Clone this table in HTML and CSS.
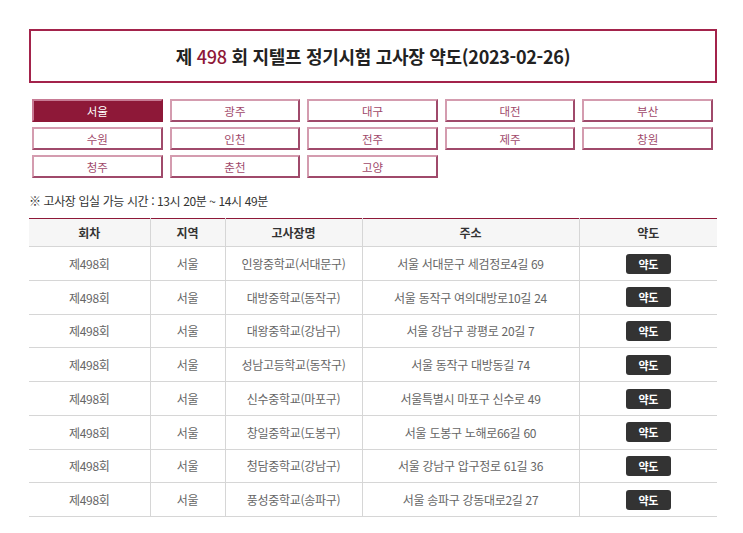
FILE: index.html
```html
<!DOCTYPE html>
<html lang="ko">
<head>
<meta charset="utf-8">
<title>고사장 약도</title>
<link rel="stylesheet" href="styles.css">
</head>
<body>
<div class="wrap">
  <div class="title-box">
    <h1 class="title">제 <span class="num">498</span> 회 지텔프 정기시험 고사장 약도(2023-02-26)</h1>
  </div>
  <div class="regions">
    <a class="region active">서울</a>
    <a class="region">광주</a>
    <a class="region">대구</a>
    <a class="region">대전</a>
    <a class="region">부산</a>
    <a class="region">수원</a>
    <a class="region">인천</a>
    <a class="region">전주</a>
    <a class="region">제주</a>
    <a class="region">창원</a>
    <a class="region">청주</a>
    <a class="region">춘천</a>
    <a class="region">고양</a>
  </div>
  <p class="notice">※ 고사장 입실 가능 시간 : 13시 20분 ~ 14시 49분</p>
  <table class="list">
    <colgroup>
      <col class="c1"><col class="c2"><col class="c3"><col class="c4"><col class="c5">
    </colgroup>
    <thead>
      <tr><th>회차</th><th>지역</th><th>고사장명</th><th>주소</th><th>약도</th></tr>
    </thead>
    <tbody>
      <tr><td>제498회</td><td>서울</td><td>인왕중학교(서대문구)</td><td>서울 서대문구 세검정로4길 69</td><td><a class="map-btn">약도</a></td></tr>
      <tr><td>제498회</td><td>서울</td><td>대방중학교(동작구)</td><td>서울 동작구 여의대방로10길 24</td><td><a class="map-btn">약도</a></td></tr>
      <tr><td>제498회</td><td>서울</td><td>대왕중학교(강남구)</td><td>서울 강남구 광평로 20길 7</td><td><a class="map-btn">약도</a></td></tr>
      <tr><td>제498회</td><td>서울</td><td>성남고등학교(동작구)</td><td>서울 동작구 대방동길 74</td><td><a class="map-btn">약도</a></td></tr>
      <tr><td>제498회</td><td>서울</td><td>신수중학교(마포구)</td><td>서울특별시 마포구 신수로 49</td><td><a class="map-btn">약도</a></td></tr>
      <tr><td>제498회</td><td>서울</td><td>창일중학교(도봉구)</td><td>서울 도봉구 노해로66길 60</td><td><a class="map-btn">약도</a></td></tr>
      <tr><td>제498회</td><td>서울</td><td>청담중학교(강남구)</td><td>서울 강남구 압구정로 61길 36</td><td><a class="map-btn">약도</a></td></tr>
      <tr><td>제498회</td><td>서울</td><td>풍성중학교(송파구)</td><td>서울 송파구 강동대로2길 27</td><td><a class="map-btn">약도</a></td></tr>
    </tbody>
  </table>
</div>
</body>
</html>
```

FILE: styles.css
```css
* { box-sizing: border-box; }
html, body { margin: 0; padding: 0; background: #fff; }
body {
  font-family: "Noto Sans CJK KR", "Noto Sans", sans-serif;
  color: #333;
  font-size: 12px;
}
.wrap {
  width: 688px;
  margin-left: 29px;
  padding-top: 29px;
}
.title-box {
  height: 54px;
  border: 2px solid #a3234b;
  display: flex;
  align-items: center;
  justify-content: center;
}
.title {
  margin: 0;
  font-size: 18px;
  font-weight: 700;
  color: #222;
  letter-spacing: -0.3px;
  line-height: 1;
}
.title .num { color: #8e1838; font-weight: 500; }
.regions {
  margin: 16px 4px 0 3px;
  display: grid;
  grid-template-columns: repeat(5, 1fr);
  column-gap: 7px;
  row-gap: 5px;
}
.region {
  display: flex;
  align-items: center;
  justify-content: center;
  height: 23px;
  border: 2px solid;
  border-color: #d49caf #a04a6b #a04a6b #d49caf;
  color: #a0486a;
  font-size: 11.5px;
  background: #fff;
}
.region.active {
  background: #8e1838;
  border-color: #c77a94 #8e1838 #8e1838 #c77a94;
  color: #fff;
}
.notice {
  margin: 14px 0 0 0;
  height: 18px;
  line-height: 18px;
  font-size: 12px;
  color: #333;
  letter-spacing: -0.4px;
}
.list {
  margin-top: 8px;
  width: 100%;
  border-collapse: collapse;
  table-layout: fixed;
  border-top: 1px solid #8e1838;
}
.c1 { width: 121px; }
.c2 { width: 75px; }
.c3 { width: 137px; }
.c4 { width: 217px; }
.c5 { width: 138px; }
.list th {
  height: 28px;
  padding: 0;
  background: #f6f6f6;
  font-weight: 700;
  font-size: 12px;
  color: #333;
  border-bottom: 1px solid #d6d6d6;
  border-left: 1px solid #d6d6d6;
}
.list td {
  height: 33.75px;
  padding: 0;
  text-align: center;
  color: #666;
  font-size: 12px;
  border-bottom: 1px solid #d6d6d6;
  border-left: 1px solid #d6d6d6;
  letter-spacing: -0.3px;
}
.list th:first-child, .list td:first-child { border-left: none; }
.map-btn {
  display: inline-flex;
  align-items: center;
  justify-content: center;
  width: 45px;
  height: 20px;
  background: #333;
  color: #fff;
  border-radius: 3px;
  font-size: 11px;
  font-weight: 700;
  vertical-align: middle;
}
```
